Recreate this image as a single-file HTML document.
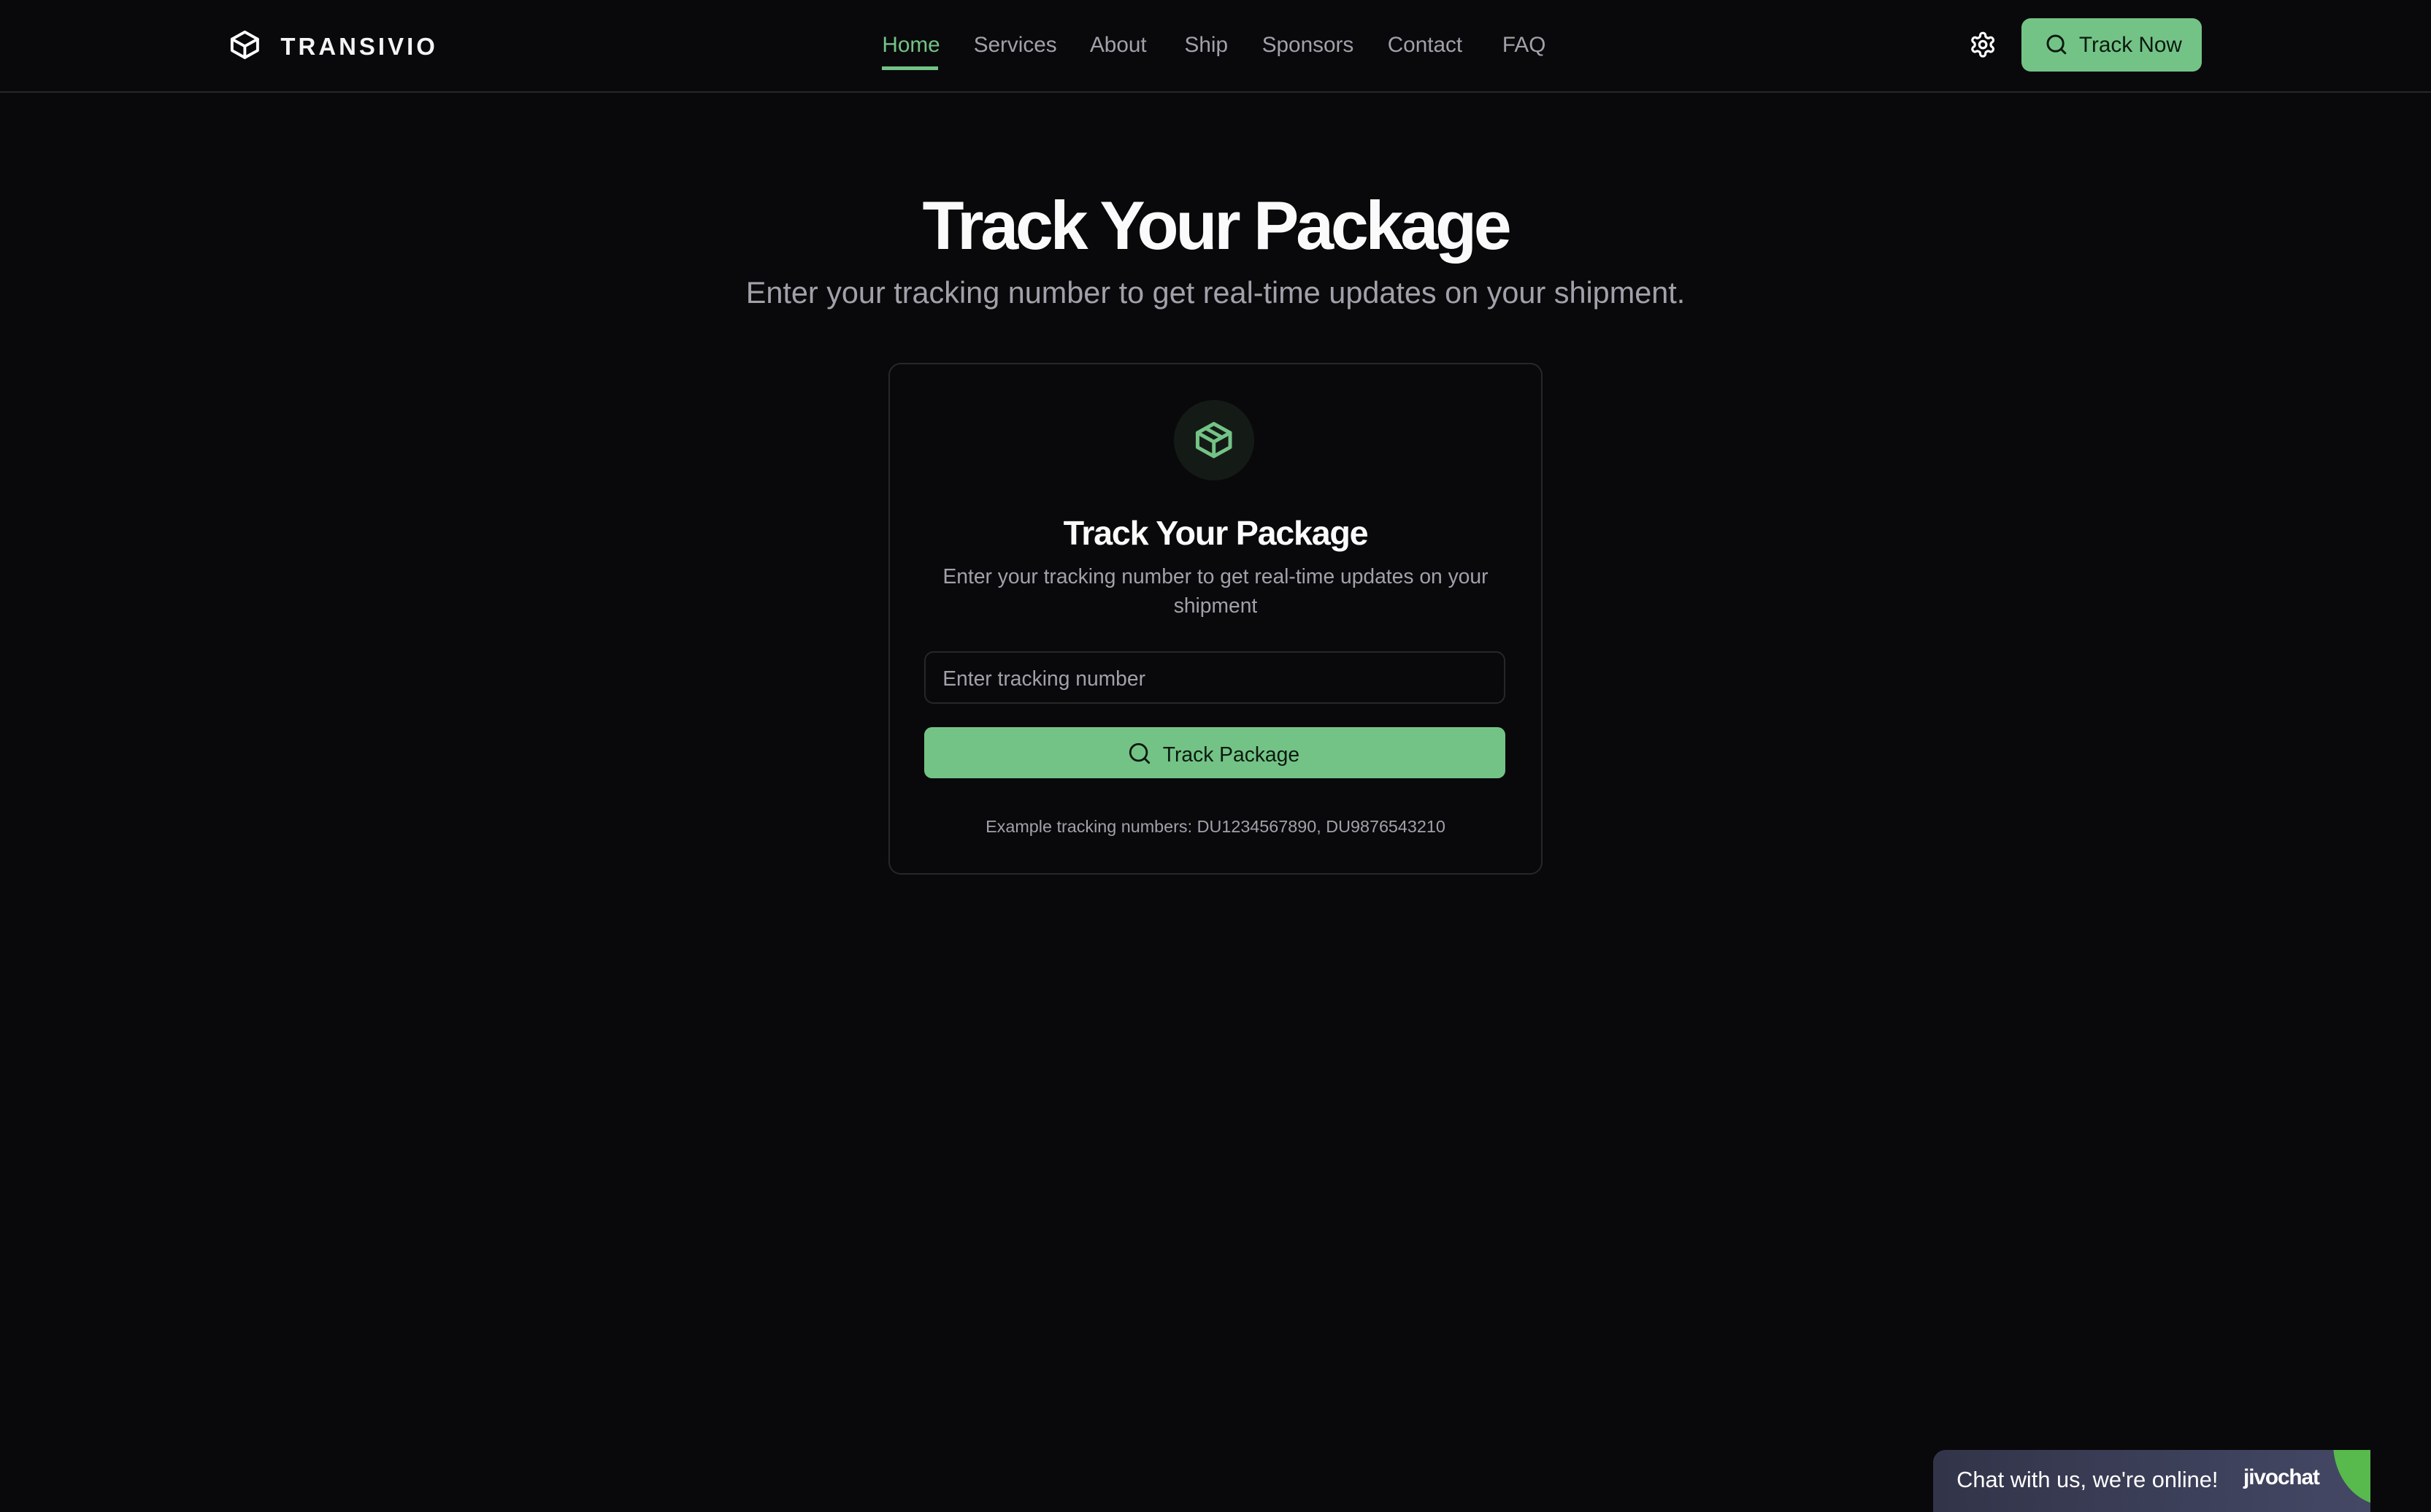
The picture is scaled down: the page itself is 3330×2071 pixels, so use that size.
<!DOCTYPE html>
<html><head><meta charset="utf-8"><style>
html,body{margin:0;padding:0;background:#09090b;}
body{width:1568px;height:973.7px;zoom:2.12372;position:relative;overflow:hidden;font-family:"Liberation Sans",sans-serif;color:#fafafa;}
.hdr{position:absolute;left:0;top:0;width:1568px;height:59px;border-bottom:1px solid #27272a;}
.abs{position:absolute;}
.nav a{position:absolute;top:21px;font-size:14px;color:#a1a1aa;white-space:nowrap;}
.center{position:absolute;left:0;width:1568px;text-align:center;white-space:nowrap;}
</style></head><body>
<div class="hdr"></div>
<svg class="abs" style="left:147px;top:18px" width="22" height="22" viewBox="0 0 24 24" fill="none" stroke="#fff" stroke-width="2" stroke-linejoin="round" stroke-linecap="round"><path d="M21 8l-9-5-9 5v8l9 5 9-5z"/><path d="M3 8l9 5 9-5M12 13v8"/></svg>
<div class="abs" style="left:181px;top:21px;font-size:15.5px;font-weight:bold;letter-spacing:1.9px;color:#f4f4f5">TRANSIVIO</div>
<div class="nav">
<a style="left:569px;color:#74c386">Home</a>
<a style="left:628px">Services</a>
<a style="left:703px">About</a>
<a style="left:764px">Ship</a>
<a style="left:814px">Sponsors</a>
<a style="left:895px">Contact</a>
<a style="left:969px">FAQ</a>
</div>
<div class="abs" style="left:569px;top:43px;width:36px;height:2px;background:#74c386"></div>
<svg class="abs" style="left:1270px;top:20px" width="18" height="18" viewBox="0 0 24 24" fill="none" stroke="#fff" stroke-width="2"><path d="M12.22 2h-.44a2 2 0 0 0-2 2v.18a2 2 0 0 1-1 1.73l-.43.25a2 2 0 0 1-2 0l-.15-.08a2 2 0 0 0-2.730.73l-.22.38a2 2 0 0 0 .73 2.73l.15.1a2 2 0 0 1 1 1.72v.51a2 2 0 0 1-1 1.74l-.15.09a2 2 0 0 0-.73 2.73l.22.38a2 2 0 0 0 2.73.73l.15-.08a2 2 0 0 1 2 0l.43.25a2 2 0 0 1 1 1.73V20a2 2 0 0 0 2 2h.44a2 2 0 0 0 2-2v-.18a2 2 0 0 1 1-1.73l.43-.25a2 2 0 0 1 2 0l.15.08a2 2 0 0 0 2.73-.73l.22-.39a2 2 0 0 0-.73-2.73l-.15-.08a2 2 0 0 1-1-1.74v-.5a2 2 0 0 1 1-1.74l.15-.09a2 2 0 0 0 .73-2.730l-.22-.38a2 2 0 0 0-2.73-.73l-.15.08a2 2 0 0 1-2 0l-.43-.25a2 2 0 0 1-1-1.73V4a2 2 0 0 0-2-2z"/><circle cx="12" cy="12" r="3"/></svg>
<div class="abs" style="left:1304px;top:12px;width:116px;height:34px;background:#74c386;border-radius:6px"></div>
<svg class="abs" style="left:1319px;top:21px" width="15" height="15" viewBox="0 0 24 24" fill="none" stroke="#0b1a10" stroke-width="2.2" stroke-linecap="round"><circle cx="11" cy="11" r="8"/><path d="M21 21l-4.3-4.3"/></svg>
<div class="abs" style="left:1341px;top:21px;font-size:14px;color:#0b1a10">Track Now</div>

<div class="center" style="top:120px;font-size:44px;font-weight:bold;letter-spacing:-2px">Track Your Package</div>
<div class="center" style="top:178px;font-size:19.5px;color:#a1a1aa">Enter your tracking number to get real-time updates on your shipment.</div>

<div class="abs" style="left:573px;top:234px;width:420px;height:328px;border:1px solid #27272a;border-radius:8px"></div>
<div class="abs" style="left:757px;top:258px;width:52px;height:52px;border-radius:50%;background:#141b17"></div>
<svg class="abs" style="left:769px;top:270px" width="28" height="28" viewBox="0 0 24 24" fill="none" stroke="#74c386" stroke-width="2" stroke-linejoin="round" stroke-linecap="round"><path d="M21 8l-9-5-9 5v8l9 5 9-5z"/><path d="M3 8l9 5 9-5M12 13v8M7.5 5.5l9 5"/></svg>
<div class="center" style="top:331px;font-size:22px;font-weight:bold;letter-spacing:-0.6px">Track Your Package</div>
<div class="center" style="top:362px;font-size:13.3px;line-height:19px;color:#a1a1aa">Enter your tracking number to get real-time updates on your<br>shipment</div>
<div class="abs" style="left:596px;top:420px;width:373px;height:32px;border:1px solid #27272a;border-radius:6px"></div>
<div class="abs" style="left:608px;top:430px;font-size:13.3px;color:#a1a1aa">Enter tracking number</div>
<div class="abs" style="left:596px;top:469px;width:375px;height:33px;background:#74c386;border-radius:5px"></div>
<svg class="abs" style="left:727px;top:478px" width="16" height="16" viewBox="0 0 24 24" fill="none" stroke="#0b1a10" stroke-width="2" stroke-linecap="round"><circle cx="11" cy="11" r="8"/><path d="M21 21l-4.3-4.3"/></svg>
<div class="abs" style="left:750px;top:479px;font-size:13.3px;color:#0b1a10">Track Package</div>
<div class="center" style="top:527px;font-size:11px;color:#a1a1aa">Example tracking numbers: DU1234567890, DU9876543210</div>

<div class="abs" style="left:1247px;top:935px;width:282px;height:40px;border-radius:8px 0 0 0;background:linear-gradient(90deg,#323449,#444865);overflow:hidden">
<div class="abs" style="left:258px;top:-4px;width:34px;height:40px;border-radius:0 0 0 100%;background:#58b94d"></div>
</div>
<div class="abs" style="left:1262px;top:946px;font-size:14.5px;color:#fff">Chat with us, we're online!</div>
<div class="abs" style="left:1447px;top:945px;font-size:14px;font-weight:bold;color:#fff;letter-spacing:-0.5px">jivochat</div>
</body></html>
